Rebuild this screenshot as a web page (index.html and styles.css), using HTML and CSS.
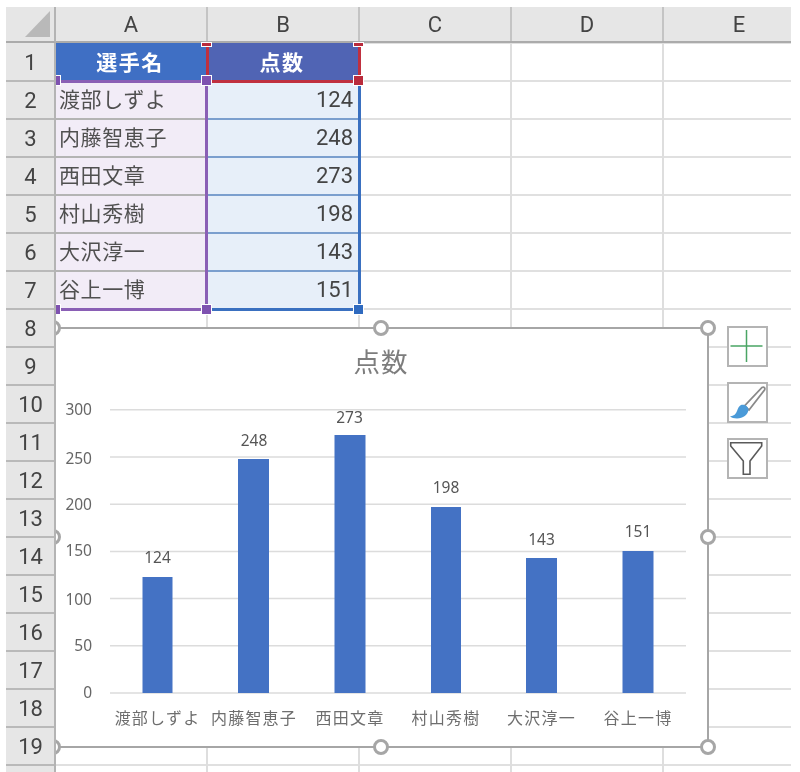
FILE: index.html
```html
<!DOCTYPE html>
<html lang="ja">
<head>
<meta charset="utf-8">
<title>点数</title>
<link rel="stylesheet" href="styles.css">
</head>
<body>
<div class="sheet">
  <div class="corner"><svg class="corner-mark" width="26" height="26" viewBox="0 0 26 26"><path d="M25 0V26H0Z"/></svg></div>
  <div class="cols">
    <div class="col">A</div><div class="col">B</div><div class="col">C</div><div class="col">D</div><div class="col">E</div>
  </div>
  <div class="rows">
    <div class="row">1</div><div class="row">2</div><div class="row">3</div><div class="row">4</div><div class="row">5</div>
    <div class="row">6</div><div class="row">7</div><div class="row">8</div><div class="row">9</div><div class="row">10</div>
    <div class="row">11</div><div class="row">12</div><div class="row">13</div><div class="row">14</div><div class="row">15</div>
    <div class="row">16</div><div class="row">17</div><div class="row">18</div><div class="row">19</div><div class="row"></div>
  </div>
  <div class="cells">
    <div class="table">
      <div class="cell head head-a">選手名</div><div class="cell head head-b">点数</div>
      <div class="cell name">渡部しずよ</div><div class="cell score">124</div>
      <div class="cell name">内藤智恵子</div><div class="cell score">248</div>
      <div class="cell name">西田文章</div><div class="cell score">273</div>
      <div class="cell name">村山秀樹</div><div class="cell score">198</div>
      <div class="cell name">大沢淳一</div><div class="cell score">143</div>
      <div class="cell name">谷上一博</div><div class="cell score">151</div>
    </div>

    <div class="range range-red"></div>
    <div class="range range-purple"></div>
    <div class="range range-blue"></div>
    <i class="grip grip-red grip-t1"></i>
    <i class="grip grip-red grip-t2"></i>
    <i class="grip grip-purple grip-m0"></i>
    <i class="grip grip-purple grip-m1"></i>
    <i class="grip grip-red grip-m2"></i>
    <i class="grip grip-purple grip-b0"></i>
    <i class="grip grip-purple grip-b1"></i>
    <i class="grip grip-blue grip-b2"></i>

    <svg class="chart" width="660" height="430" viewBox="50 323 660 430">
      <rect class="chart-bg" x="55" y="328" width="653" height="419"/>
      <text class="chart-title" x="381" y="372">点数</text>
      <g class="gridlines">
        <path d="M110 409.7H686M110 456.9H686M110 504.2H686M110 551.4H686M110 598.6H686M110 645.8H686M110 693H686"/>
      </g>
      <g class="axis-y">
        <text x="92" y="415">300</text>
        <text x="92" y="464">250</text>
        <text x="92" y="510">200</text>
        <text x="92" y="556">150</text>
        <text x="92" y="605">100</text>
        <text x="92" y="651">50</text>
        <text x="92" y="698">0</text>
      </g>
      <g class="bars">
        <rect x="142.500" y="577" width="30" height="116"/>
        <rect x="238" y="459" width="31" height="234"/>
        <rect x="334.500" y="435" width="31" height="258"/>
        <rect x="431" y="507" width="30" height="186"/>
        <rect x="526" y="558" width="31" height="135"/>
        <rect x="622.500" y="551" width="31" height="142"/>
      </g>
      <g class="data-labels">
        <text x="157.500" y="563">124</text>
        <text x="254" y="446">248</text>
        <text x="349.500" y="423">273</text>
        <text x="446" y="493">198</text>
        <text x="541.500" y="545">143</text>
        <text x="638" y="537">151</text>
      </g>
      <g class="axis-x">
        <text x="157.500" y="724">渡部しずよ</text>
        <text x="254" y="724">内藤智恵子</text>
        <text x="350" y="724">西田文章</text>
        <text x="446" y="724">村山秀樹</text>
        <text x="541.500" y="724">大沢淳一</text>
        <text x="638" y="724">谷上一博</text>
      </g>
      <rect class="chart-frame" x="55" y="328" width="653" height="419"/>
      <g class="handles">
        <circle cx="53" cy="328" r="6.500"/><circle cx="381" cy="328" r="6.500"/><circle cx="708" cy="328" r="6.500"/>
        <circle cx="53" cy="537" r="6.500"/><circle cx="708" cy="537" r="6.500"/>
        <circle cx="53" cy="747" r="6.500"/><circle cx="381" cy="747" r="6.500"/><circle cx="708" cy="747" r="6.500"/>
      </g>
    </svg>

    <div class="tools">
      <div class="tool">
        <svg width="37" height="37" viewBox="0 0 37 37"><path class="plus" d="M1.500 18H33.500M17.500 2V34"/></svg>
      </div>
      <div class="tool">
        <svg width="37" height="37" viewBox="0 0 37 37">
          <path class="brush-handle" d="M33 3.500C35 2.500 36.500 4 35.500 6L20 26L15.500 22Z"/>
          <path class="brush-hair" d="M12 21C15 20 19 22 19.500 25.500C19 31 14 34.500 8 34.500C5 34.500 2.500 33.800 1 32.500C5 32 7 30 8 27C9 24 10 22 12 21Z"/>
        </svg>
      </div>
      <div class="tool">
        <svg width="37" height="37" viewBox="0 0 37 37"><path class="funnel" d="M1.700 2.700H32.700V6L21 21V34.300H14.300V21L1.700 6Z"/></svg>
      </div>
    </div>
  </div>
</div>
</body>
</html>
```

FILE: styles.css
```css
html, body {
  margin: 0;
  padding: 0;
  background: #fff;
}

body {
  width: 800px;
  height: 772px;
  overflow: hidden;
  padding: 7px 9px 0 6px;
  box-sizing: border-box;
}

.sheet {
  display: grid;
  grid-template-columns: 50px 735px;
  grid-template-rows: 36px 729px;
  width: 785px;
  height: 765px;
  font-family: Roboto, "Liberation Sans", sans-serif;
  color: #444;
  filter: blur(0.6px);
}

.corner {
  display: flex;
  align-items: flex-end;
  justify-content: flex-end;
  background: #e6e6e6;
  border-right: 2px solid #b4b4b4;
  border-bottom: 2px solid #ababab;
  box-sizing: border-box;
  padding: 0 3px 4px 0;
}

.corner-mark path {
  fill: #b9b9b9;
}

.cols {
  display: grid;
  grid-template-columns: 152px 152px 152px 152px 152px;
  background: #e6e6e6;
  border-bottom: 2px solid #ababab;
  box-sizing: border-box;
  overflow: hidden;
}

.col {
  display: flex;
  align-items: center;
  justify-content: center;
  font-size: 22px;
  border-right: 2px solid #c4c4c4;
  box-sizing: border-box;
}

.rows {
  position: relative;
  z-index: 3;
  display: grid;
  grid-auto-rows: 38px;
  background: #e6e6e6;
  border-right: 2px solid #b4b4b4;
  box-sizing: border-box;
  height: 729px;
  padding-top: 1px;
  overflow: hidden;
}

.row {
  display: flex;
  align-items: center;
  justify-content: center;
  font-size: 22px;
  line-height: 1;
  border-bottom: 2px solid #b9b9b9;
  box-sizing: border-box;
  padding: 2px 0 0 1px;
}

.cells {
  position: relative;
  background-color: #fff;
  background-image:
    linear-gradient(to right, transparent 150px, #dedede 150px, #dedede 152px, transparent 152px),
    linear-gradient(to bottom, transparent 36px, #e0e0e0 36px, #e0e0e0 38px, transparent 38px);
  background-size: 152px 100%, 100% 38px;
  background-position: 0 0, 0 1px;
  background-repeat: repeat-x, repeat-y;
}

.table {
  display: grid;
  grid-template-columns: 152px 152px;
  grid-template-rows: 39px;
  grid-auto-rows: 38px;
  width: 304px;
}

.cell {
  display: flex;
  align-items: center;
  box-sizing: border-box;
  font-size: 21px;
  padding: 0 7px 5px 3px;
  border-bottom: 2px solid #b4b4b4;
}

.head {
  justify-content: center;
  color: #fff;
  font-family: "Noto Sans CJK JP", sans-serif;
  font-weight: 700;
  letter-spacing: 1.5px;
  border-bottom: 0;
  padding-bottom: 3px;
}

.head-a {
  background: #3f6fc4;
}

.head-b {
  background: #5064b4;
}

.name {
  background: #f2ecf7;
  font-family: "Noto Sans CJK JP", sans-serif;
  letter-spacing: 0.6px;
  color: #505050;
}

.score {
  justify-content: flex-end;
  background: #e7eff9;
  font-size: 22px;
  padding-bottom: 2px;
  border-bottom-color: #7b9fce;
}

.range {
  position: absolute;
  box-sizing: border-box;
  border-style: solid;
  border-width: 3px;
}

.range-purple {
  left: 0;
  top: 37px;
  width: 152px;
  height: 231px;
  border-color: #8a5fb5;
  border-left: 0;
}

.range-blue {
  left: 152px;
  top: 39px;
  width: 153px;
  height: 229px;
  border-color: #3a70c0;
  border-left: 0;
  border-top: 0;
}

.range-red {
  left: 150px;
  top: 0;
  width: 155px;
  height: 40px;
  border-color: #c0303f;
  border-top: 0;
}

.grip {
  position: absolute;
  width: 9px;
  height: 9px;
  box-shadow: 0 0 0 1px #fff;
}

.grip-red { background: #b92b3c; }
.grip-purple { background: #7e52b0; }
.grip-blue { background: #2f6abf; }

.grip-t1 { left: 146px; top: 0; height: 3px; }
.grip-t2 { left: 298px; top: 0; height: 3px; }
.grip-m0 { left: 0; top: 33px; width: 4px; }
.grip-m1 { left: 146px; top: 33px; }
.grip-m2 { left: 298px; top: 33px; }
.grip-b0 { left: 0; top: 262px; width: 4px; }
.grip-b1 { left: 146px; top: 262px; }
.grip-b2 { left: 298px; top: 262px; }

.chart {
  position: absolute;
  left: -6px;
  top: 280px;
  overflow: visible;
}

.chart-bg {
  fill: #fff;
}

.chart-frame {
  fill: none;
  stroke: #a6a6a6;
  stroke-width: 2;
}

.chart-title {
  font-family: "Noto Sans CJK JP", sans-serif;
  font-size: 26.500px;
  fill: #7d7d7d;
  text-anchor: middle;
  letter-spacing: 1px;
}

.gridlines path {
  fill: none;
  stroke: #dcdcdc;
  stroke-width: 1.500;
}

.axis-y text {
  font-family: "Noto Sans", Roboto, sans-serif;
  font-size: 15.500px;
  fill: #666;
  text-anchor: end;
}

.bars rect {
  fill: #4472c4;
}

.data-labels text {
  font-family: "Noto Sans", Roboto, sans-serif;
  font-size: 15.500px;
  fill: #555;
  text-anchor: middle;
}

.axis-x text {
  font-family: "Noto Sans CJK JP", sans-serif;
  font-size: 16px;
  fill: #6e6e6e;
  text-anchor: middle;
  letter-spacing: 1.200px;
}

.handles circle {
  fill: #fff;
  stroke: #a6a6a6;
  stroke-width: 3;
}

.tools {
  position: absolute;
  left: 671px;
  top: 283px;
  display: flex;
  flex-direction: column;
  gap: 15px;
}

.tool {
  width: 41px;
  height: 41px;
  box-sizing: border-box;
  border: 2px solid #b4b4b4;
  background: #fff;
}

.tool svg {
  display: block;
}

.plus {
  fill: none;
  stroke: #4aa564;
  stroke-width: 1.500;
}

.brush-handle {
  fill: #fff;
  stroke: #8a8a8a;
  stroke-width: 1.800;
}

.brush-hair {
  fill: #4a9ad8;
}

.funnel {
  fill: #fff;
  stroke: #5a5a5a;
  stroke-width: 1.600;
}
```
